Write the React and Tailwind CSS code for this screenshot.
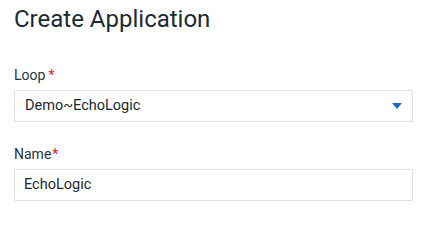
export default function App() {
  return (
    <div className="w-[436px] h-[217px] bg-white pl-[14px] pr-[23px] pt-[3px]" style={{ fontFamily: 'Roboto, "Liberation Sans", sans-serif' }}>
      <h1 className="text-[24px] leading-[32px] text-[#1b2a35] font-normal">Create Application</h1>
      <div className="mt-[30px]">
        <label className="block text-[14px] leading-[20px] text-[#27333d]">
          Loop<span className="text-[#e8202a] ml-[3px]">*</span>
        </label>
        <div className="mt-[5px] h-[32px] border border-[#dfe1e3] flex items-center justify-between pl-[10px] pr-[10px]">
          <span className="text-[14.5px] text-[#1c2730]">Demo~EchoLogic</span>
          <svg width="10" height="6" viewBox="0 0 10 6">
            <path d="M0 0 H10 L5 6 Z" fill="#1a6fc2" />
          </svg>
        </div>
      </div>
      <div className="mt-[22px]">
        <label className="block text-[14px] leading-[20px] text-[#27333d]">
          Name<span className="text-[#e8202a] ml-[1px]">*</span>
        </label>
        <div className="mt-[5px] h-[32px] border border-[#dfe1e3] flex items-center pl-[9px]">
          <span className="text-[14.5px] text-[#1c2730]">EchoLogic</span>
        </div>
      </div>
    </div>
  );
}
